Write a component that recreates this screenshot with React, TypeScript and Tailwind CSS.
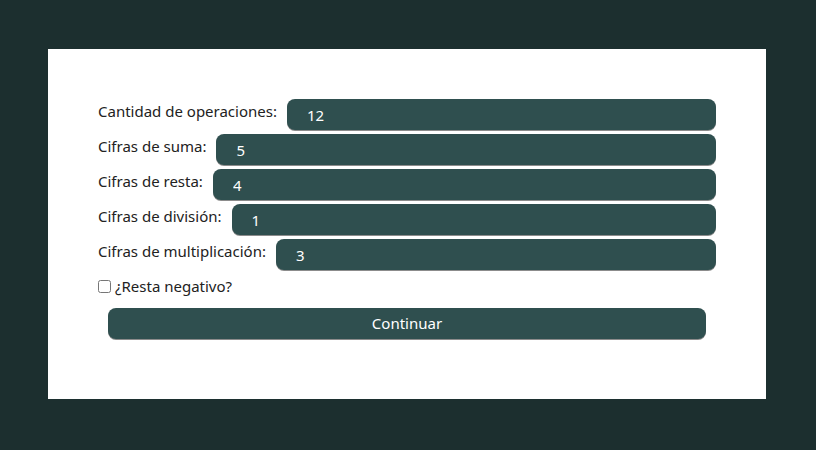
import React, { useState } from 'react';

const campos = [
  { id: 'operaciones', label: 'Cantidad de operaciones:', valor: '12' },
  { id: 'suma', label: 'Cifras de suma:', valor: '5' },
  { id: 'resta', label: 'Cifras de resta:', valor: '4' },
  { id: 'division', label: 'Cifras de división:', valor: '1' },
  { id: 'multiplicacion', label: 'Cifras de multiplicación:', valor: '3' },
];

const App = () => {
  const [valores, setValores] = useState<Record<string, string>>(
    Object.fromEntries(campos.map((c) => [c.id, c.valor]))
  );
  const [negativo, setNegativo] = useState(false);

  return (
    <div className="min-h-screen w-full bg-[#1c2f2f] pt-[49px] px-[48px] font-['Noto_Sans',sans-serif]">
      <div className="bg-white w-[718px] h-[350px] px-[50px] pt-[50px]">
        <div className="flex flex-col gap-[4px]">
          {campos.map((campo) => (
            <div key={campo.id} className="flex items-start">
              <label htmlFor={campo.id} className="text-[15px] leading-6 text-[#222] mr-[10px] whitespace-nowrap">
                {campo.label}
              </label>
              <input
                id={campo.id}
                type="text"
                value={valores[campo.id]}
                onChange={(e) => setValores({ ...valores, [campo.id]: e.target.value })}
                className="flex-1 h-[31px] rounded-lg bg-[#2f4f4f] text-white text-[15px] pl-[20px] outline-none shadow-[0_1px_0_#8c8c8c]"
              />
            </div>
          ))}
        </div>
        <label className="flex items-center mt-[5px] text-[15px] text-[#222]">
          <input
            type="checkbox"
            checked={negativo}
            onChange={() => setNegativo(!negativo)}
            className="w-[13px] h-[13px] mr-[4px]"
          />
          ¿Resta negativo?
        </label>
        <div className="px-[10px] mt-[10px]">
          <button className="w-full h-[31px] rounded-lg bg-[#2f4f4f] text-white text-[15px] shadow-[0_1px_0_#8c8c8c]">
            Continuar
          </button>
        </div>
      </div>
    </div>
  );
};

export default App;
